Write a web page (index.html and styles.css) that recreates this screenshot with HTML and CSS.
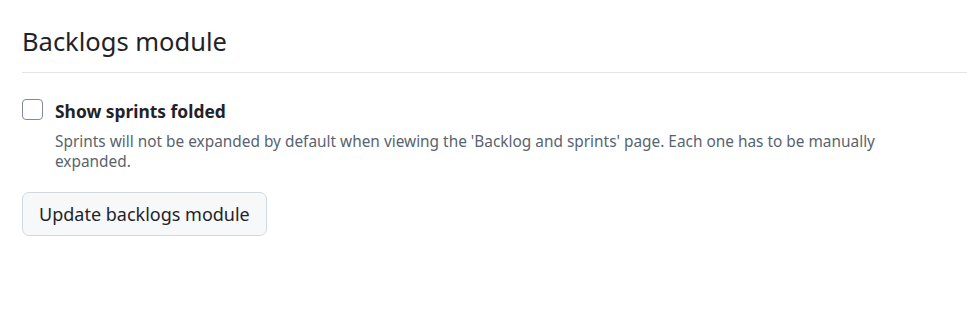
FILE: index.html
```html
<!DOCTYPE html>
<html>
<head>
<meta charset="utf-8">
<link rel="stylesheet" href="styles.css">
</head>
<body>
<div class="page">
  <div class="subhead">
    <h2 class="subhead-title">Backlogs module</h2>
  </div>
  <div class="form-check">
    <input type="checkbox" class="checkbox" id="folded">
    <div class="check-body">
      <label for="folded" class="check-label">Show sprints folded</label>
      <p class="note">Sprints will not be expanded by default when viewing the 'Backlog and sprints' page. Each one has to be manually expanded.</p>
    </div>
  </div>
  <button class="btn">Update backlogs module</button>
</div>
</body>
</html>
```
FILE: styles.css
```css
html, body {
  margin: 0;
  padding: 0;
  background: #ffffff;
}
body {
  font-family: "Noto Sans", "Open Sans", sans-serif;
  color: #1f2328;
}
.page {
  padding: 23px 0 0 22px;
}
.subhead {
  border-bottom: 1px solid #e3e6e9;
  padding-bottom: 12px;
  margin-bottom: 25px;
}
.subhead-title {
  margin: 0;
  font-size: 25.5px;
  font-weight: 400;
  line-height: 37px;
}
.form-check {
  display: flex;
  gap: 12px;
  align-items: flex-start;
}
.checkbox {
  appearance: none;
  -webkit-appearance: none;
  width: 21px;
  height: 21px;
  margin: 1px 0 0 0;
  border: 1px solid #818b98;
  border-radius: 4px;
  background: #fff;
  flex: none;
}
.check-body {
  display: flex;
  flex-direction: column;
}
.check-label {
  font-size: 17.4px;
  font-weight: 700;
  line-height: 26px;
}
.note {
  margin: 8px 0 0 0;
  font-size: 15.4px;
  line-height: 20px;
  color: #59636e;
  max-width: 840px;
}
.btn {
  margin-top: 20px;
  font-family: inherit;
  font-size: 18px;
  color: #1f2328;
  background: #f6f8fa;
  border: 1px solid #d1d9e0;
  border-radius: 7px;
  height: 44px;
  padding: 0 16px;
  line-height: 1;
}
```
